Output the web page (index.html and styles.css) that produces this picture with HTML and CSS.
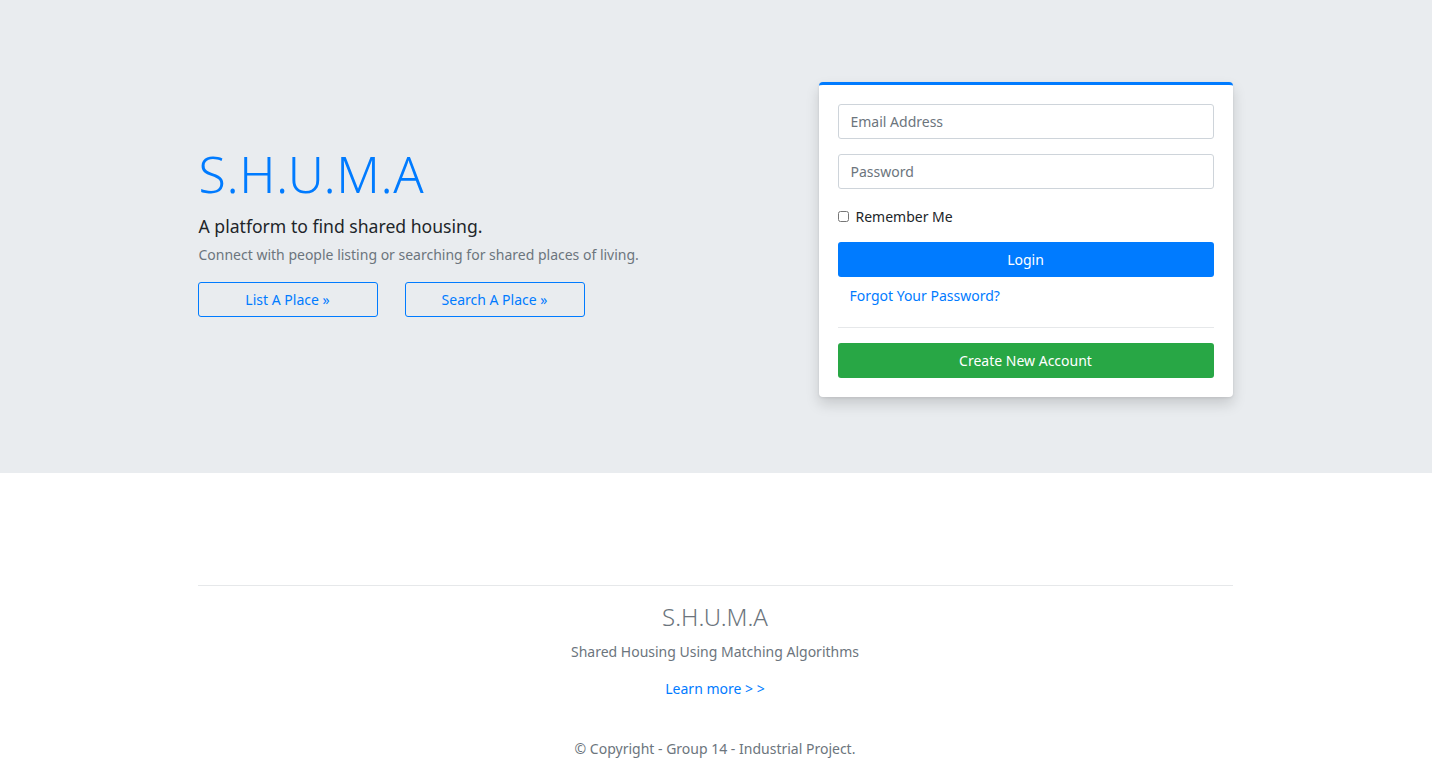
FILE: index.html
```html
<!DOCTYPE html>
<html lang="en">
<head>
<meta charset="utf-8">
<title>S.H.U.M.A</title>
<link rel="stylesheet" href="styles.css">
</head>
<body>
<section class="hero">
  <div class="container hero-row">
    <div class="hero-text">
      <h1 class="title">S.H.U.M.A</h1>
      <p class="lead">A platform to find shared housing.</p>
      <p class="muted">Connect with people listing or searching for shared places of living.</p>
      <div class="actions">
        <a class="btn-outline" href="#">List A Place »</a>
        <a class="btn-outline" href="#">Search A Place »</a>
      </div>
    </div>
    <div class="card">
      <form class="login">
        <input class="field" type="email" placeholder="Email Address">
        <input class="field" type="password" placeholder="Password">
        <label class="remember"><input type="checkbox" class="check"> Remember Me</label>
        <button type="button" class="btn btn-primary">Login</button>
        <a class="forgot" href="#">Forgot Your Password?</a>
        <hr class="divider">
        <button type="button" class="btn btn-success">Create New Account</button>
      </form>
    </div>
  </div>
</section>
<footer class="footer">
  <div class="container footer-inner">
    <h2 class="footer-title">S.H.U.M.A</h2>
    <p class="footer-sub">Shared Housing Using Matching Algorithms</p>
    <a class="learn" href="#">Learn more &gt; &gt;</a>
    <p class="copy">© Copyright - Group 14 - Industrial Project.</p>
  </div>
</footer>
</body>
</html>
```
FILE: styles.css
```css
* { box-sizing: border-box; }
html, body { margin: 0; padding: 0; }
body {
  font-family: "Segoe UI", "Noto Sans", "Open Sans", sans-serif;
  font-size: 14px;
  color: #212529;
  background: #fff;
}
.container {
  width: 1035px;
  margin: 0 auto;
  position: relative;
  left: -1px;
}
.hero {
  background: #e9ecef;
  height: 473px;
  padding-top: 82px;
}
.hero-row {
  display: flex;
  justify-content: space-between;
  align-items: flex-start;
}
.hero-text {
  padding-top: 62px;
  padding-left: 1px;
}
.title {
  margin: 0;
  font-size: 50px;
  font-weight: 300;
  color: #007bff;
  line-height: 1.2;
  letter-spacing: 0.6px;
}
.lead {
  margin: 9px 0 0;
  font-size: 17.6px;
  font-weight: 400;
  line-height: 1.5;
}
.muted {
  margin: 5px 0 0;
  color: #6c757d;
  font-size: 14px;
  line-height: 1.5;
}
.actions {
  display: flex;
  gap: 27px;
  margin-top: 17px;
  margin-left: -1px;
}
.btn-outline {
  display: flex;
  align-items: center;
  justify-content: center;
  width: 180px;
  height: 35px;
  border: 1px solid #007bff;
  border-radius: 3px;
  color: #007bff;
  text-decoration: none;
  font-size: 14px;
}
.card {
  width: 414px;
  background: #fff;
  border-top: 3px solid #007bff;
  border-radius: 4px;
  box-shadow: 0 7px 14px rgba(0,0,0,0.15), 0 1px 3px rgba(0,0,0,0.08);
  padding: 19px 19px 19px;
}
.login {
  display: flex;
  flex-direction: column;
}
.field {
  height: 35px;
  border: 1px solid #ced4da;
  border-radius: 3px;
  padding: 0 12px;
  font-family: inherit;
  font-size: 14px;
  color: #495057;
  margin-bottom: 15px;
}
.field::placeholder { color: #6c757d; }
.remember {
  display: flex;
  align-items: center;
  gap: 7px;
  font-size: 14px;
  margin-top: 2px;
  height: 20px;
}
.check {
  margin: 0;
  width: 11px;
  height: 11px;
}
.btn {
  height: 35px;
  border: none;
  border-radius: 3px;
  color: #fff;
  font-family: inherit;
  font-size: 14px;
}
.btn-primary { background: #007bff; margin-top: 16px; }
.btn-success { background: #28a745; }
.forgot {
  color: #007bff;
  text-decoration: none;
  font-size: 14px;
  padding: 9px 12px 0;
  height: 36px;
}
.divider {
  border: 0;
  border-top: 1px solid #e6e8ea;
  margin: 14px 0 15px;
  width: 100%;
}
.footer {
  padding-top: 112px;
}
.footer-inner {
  border-top: 1px solid #e6e8ea;
  text-align: center;
  padding-top: 15px;
}
.footer-title {
  margin: 0;
  font-size: 24px;
  font-weight: 300;
  color: #6c757d;
  line-height: 1.3;
}
.footer-sub {
  margin: 10px 0 0;
  color: #6c757d;
  font-size: 14px;
}
.learn {
  display: inline-block;
  margin-top: 18px;
  color: #007bff;
  text-decoration: none;
  font-size: 14px;
}
.copy {
  margin: 41px 0 0;
  color: #6c757d;
  font-size: 14px;
}
```
